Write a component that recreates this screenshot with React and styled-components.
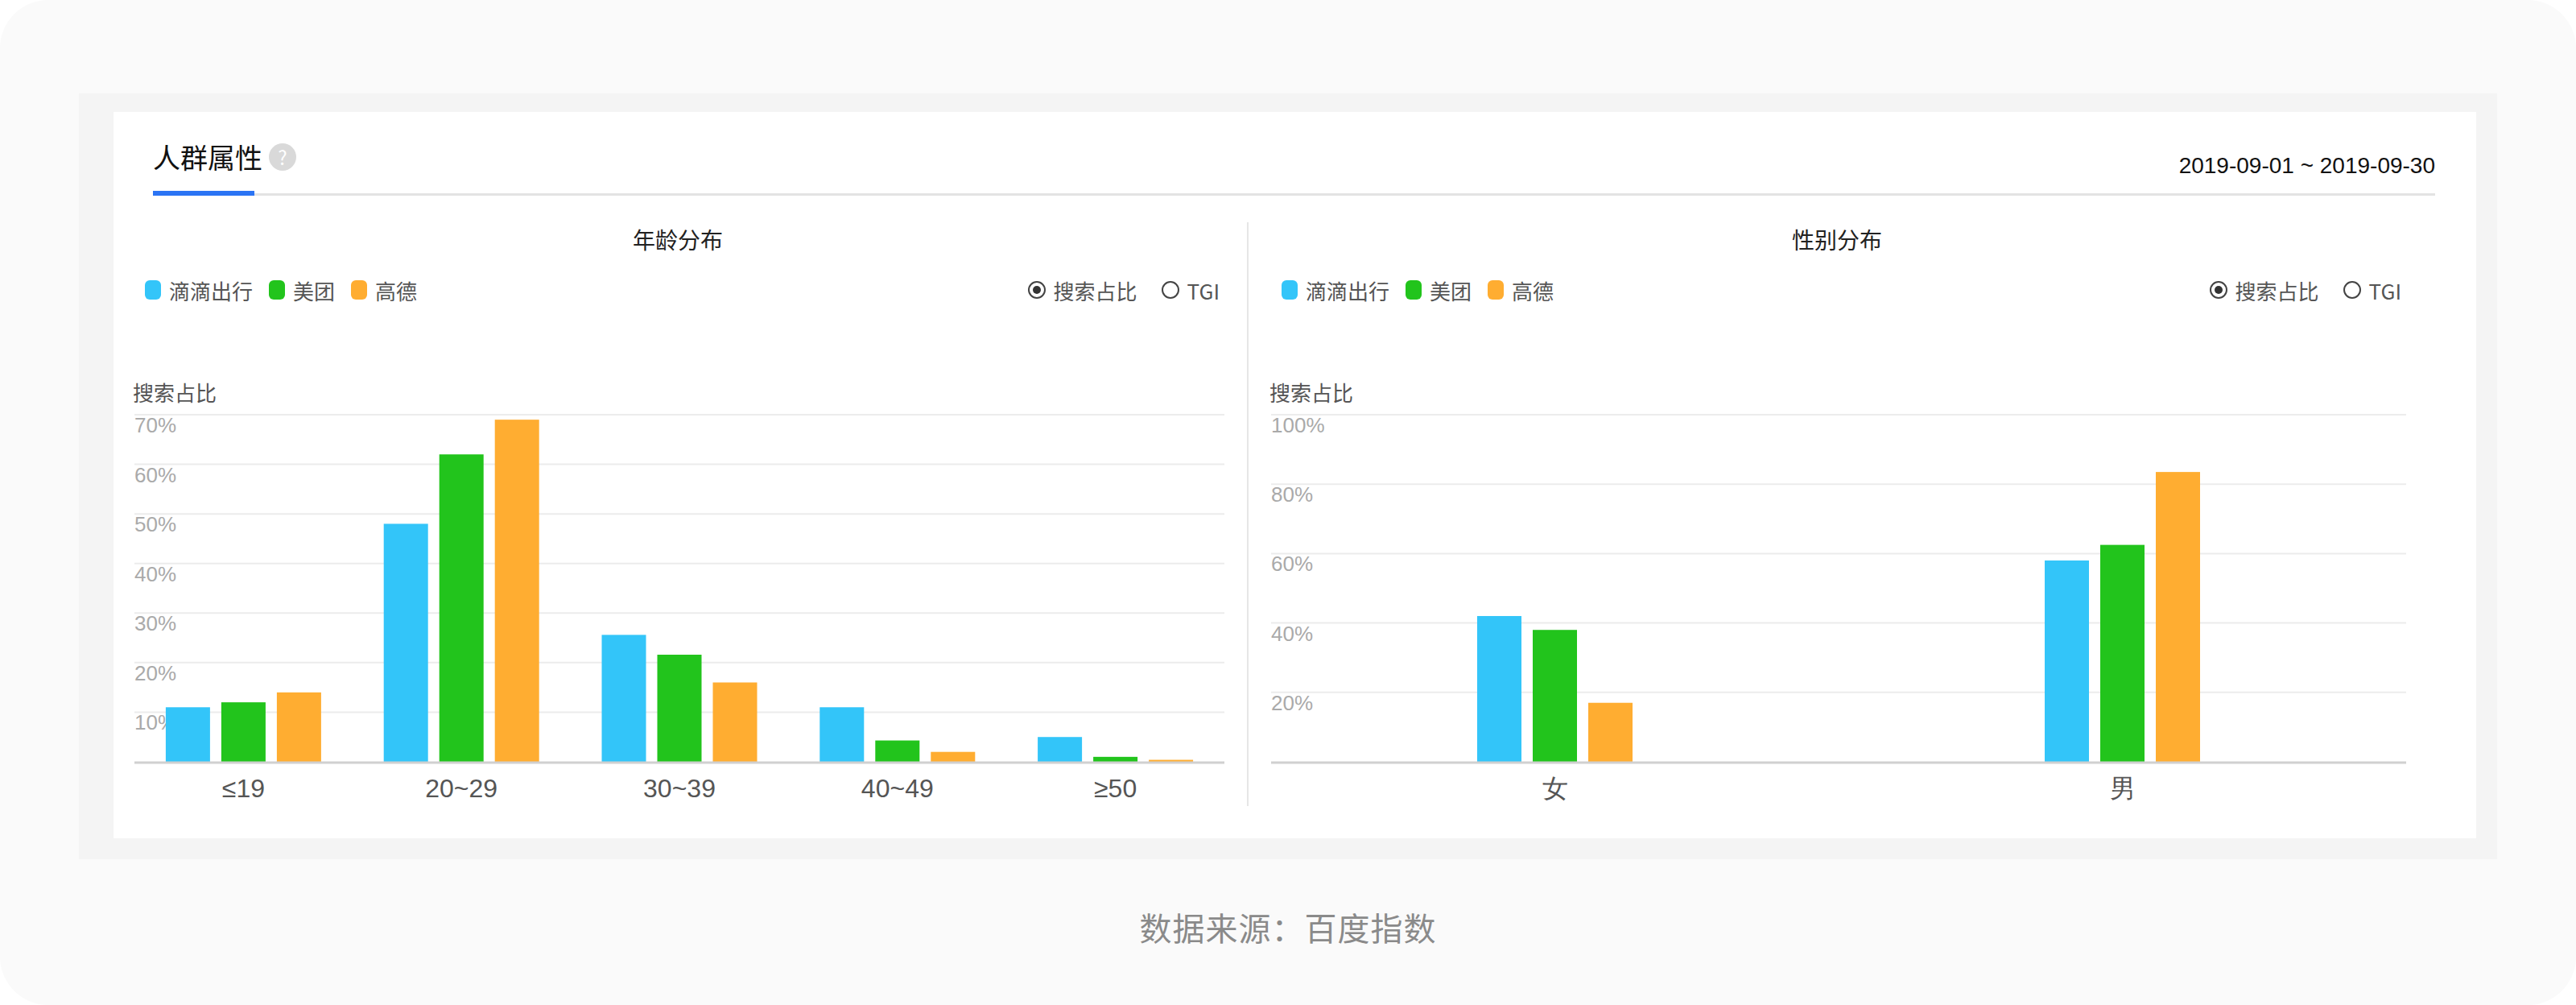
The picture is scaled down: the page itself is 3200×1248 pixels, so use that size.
import React from 'react';
import styled, { createGlobalStyle } from 'styled-components';

const Global = createGlobalStyle`
  html, body { margin: 0; padding: 0; background: #fff; }
  body { font-family: "Noto Sans CJK SC", "Noto Sans", sans-serif; }
`;

const COLORS = ['#33c5f9', '#22c41c', '#ffad31'];
const SERIES = ['滴滴出行', '美团', '高德'];

const Frame = styled.div`
  width: 3200px;
  height: 1248px;
  box-sizing: border-box;
  background: #fafafa;
  border-radius: 60px;
  padding: 116px 98px 0;
`;

const Panel = styled.div`
  background: #f4f4f4;
  padding: 23px 26px 26px 43px;
`;

const Card = styled.div`
  background: #fff;
  height: 902px;
  box-sizing: border-box;
  padding: 0 51px 0 22px;
`;

const Header = styled.div`
  margin-left: 27px;
  height: 104px;
  display: flex;
  align-items: flex-end;
  justify-content: space-between;
  border-bottom: 3px solid #e3e3e3;
  box-sizing: border-box;
`;

const Tab = styled.div`
  display: flex;
  align-items: center;
  gap: 8px;
  height: 100%;
  font-size: 34px;
  color: #111;
  border-bottom: 6px solid #2b74f4;
  margin-bottom: -3px;
  box-sizing: border-box;
  padding-right: 10px;
  width: 126px;
  white-space: nowrap;
  padding-top: 10px;
`;

const Help = styled.span`
  display: inline-flex;
  align-items: center;
  justify-content: center;
  width: 34px;
  height: 34px;
  border-radius: 50%;
  background: #d9d9d9;
  color: #fff;
  font-size: 24px;
  flex-shrink: 0;
`;

const DateText = styled.div`
  font-family: "Liberation Sans", Arial, sans-serif;
  font-size: 28px;
  color: #111;
  align-self: center;
  padding-top: 32px;
`;

const Row = styled.div`
  display: flex;
  align-items: flex-start;
`;

const Section = styled.div`
  width: ${p => p.$w}px;
  display: flex;
  flex-direction: column;
`;

const Divider = styled.div`
  width: 2px;
  height: 725px;
  background: #e6e6e6;
  margin: 33px 24px 0 28px;
`;

const ChartTitle = styled.div`
  text-align: center;
  font-size: 28px;
  color: #222;
  margin-top: 34px;
  line-height: 40px;
`;

const LegendRow = styled.div`
  display: flex;
  justify-content: space-between;
  align-items: center;
  margin: 23px 6px 0 17px;
  height: 40px;
`;

const Legend = styled.div`
  display: flex;
  gap: 20px;
`;

const Item = styled.div`
  display: flex;
  align-items: center;
  gap: 10px;
  font-size: 26px;
  color: #555;
`;

const Swatch = styled.span`
  width: 20px;
  height: 24px;
  border-radius: 6px;
  background: ${p => p.$c};
`;

const Radio = styled.span`
  width: 22px;
  height: 22px;
  border-radius: 50%;
  border: 2px solid #444;
  box-sizing: border-box;
  display: inline-flex;
  align-items: center;
  justify-content: center;
  &::after {
    content: '';
    width: 10px;
    height: 10px;
    border-radius: 50%;
    background: ${p => (p.$on ? '#333' : 'transparent')};
  }
`;

const Radios = styled.div`
  display: flex;
  gap: 30px;
`;

const AxisName = styled.div`
  font-size: 26px;
  color: #555;
  margin: 89px 0 0 2px;
  line-height: 36px;
`;

const Plot = styled.svg`
  display: block;
  margin-top: 6px;
  margin-left: 4px;
  font-family: "Liberation Sans", Arial, sans-serif;
`;

const Footer = styled.div`
  text-align: center;
  margin-top: 55px;
  font-size: 40px;
  color: #8a8a8a;
  letter-spacing: 1px;
`;

function BarChart({ width, max, step, ticks, cats, data }) {
  const top = 4;
  const h = 431;
  const base = top + h;
  const catW = width / cats.length;
  const bw = 55;
  const gap = 14;
  const levels = [];
  for (let v = max; v >= step; v -= step) levels.push(v);
  return (
    <Plot width={width} height={510}>
      {levels.map((v, i) => {
        const y = top + (h * (max - v)) / max;
        return (
          <g key={v}>
            <line x1={0} x2={width} y1={y} y2={y} stroke="#ececec" strokeWidth={2} />
            <text x={0} y={y + 22} fontSize={26} fill="#aaa">{ticks(v)}</text>
          </g>
        );
      })}
      {data.map((vals, ci) => {
        const cx = catW * ci + catW / 2;
        const start = cx - (bw * 3 + gap * 2) / 2;
        return (
          <g key={ci}>
            {vals.map((v, si) => {
              const bh = (h * v) / max;
              return (
                <rect key={si} x={start + si * (bw + gap)} y={base - bh} width={bw} height={bh} fill={COLORS[si]} />
              );
            })}
            <text x={cx} y={base + 44} fontSize={32} fill="#555" textAnchor="middle">{cats[ci]}</text>
          </g>
        );
      })}
      <line x1={0} x2={width} y1={base + 1} y2={base + 1} stroke="#d0d0d0" strokeWidth={3} />
    </Plot>
  );
}

function Chart({ title, w, plotW, chart }) {
  return (
    <Section $w={w}>
      <ChartTitle>{title}</ChartTitle>
      <LegendRow>
        <Legend>
          {SERIES.map((s, i) => (
            <Item key={s}><Swatch $c={COLORS[i]} />{s}</Item>
          ))}
        </Legend>
        <Radios>
          <Item><Radio $on />搜索占比</Item>
          <Item><Radio />TGI</Item>
        </Radios>
      </LegendRow>
      <AxisName>搜索占比</AxisName>
      <BarChart width={plotW} {...chart} />
    </Section>
  );
}

const age = {
  max: 70,
  step: 10,
  ticks: v => `${v}%`,
  cats: ['≤19', '20~29', '30~39', '40~49', '≥50'],
  data: [[11, 12, 14], [48, 62, 69], [25.6, 21.6, 16], [11, 4.3, 2], [5, 1, 0.4]],
};

const gender = {
  max: 100,
  step: 20,
  ticks: v => `${v}%`,
  cats: ['女', '男'],
  data: [[42, 38, 17], [58, 62.5, 83.5]],
};

export default function App() {
  return (
    <>
      <Global />
      <Frame>
        <Panel>
          <Card>
            <Header>
              <Tab>人群属性<Help>?</Help></Tab>
              <DateText>2019-09-01 ~ 2019-09-30</DateText>
            </Header>
            <Row>
              <Chart title="年龄分布" w={1358} plotW={1354} chart={age} />
              <Divider />
              <Chart title="性别分布" w={1414} plotW={1410} chart={gender} />
            </Row>
          </Card>
        </Panel>
        <Footer>数据来源：百度指数</Footer>
      </Frame>
    </>
  );
}
